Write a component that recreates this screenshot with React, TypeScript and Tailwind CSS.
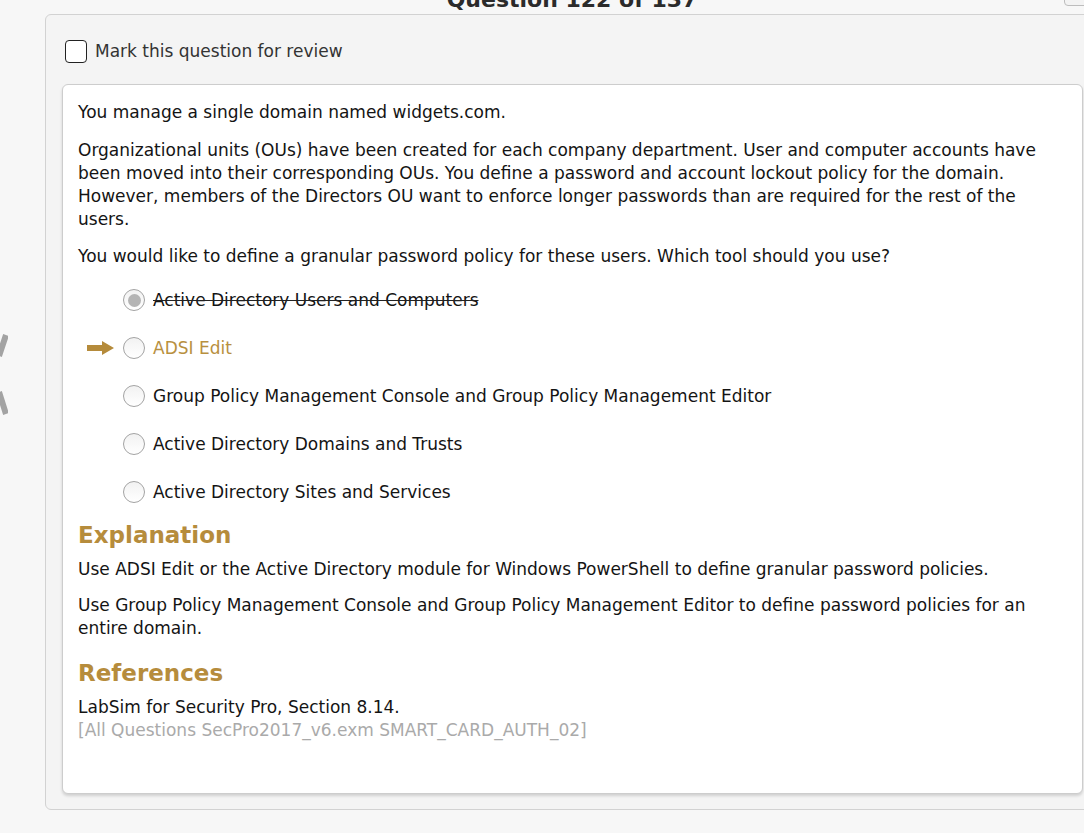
import React from 'react'

const FONT = { fontFamily: '"DejaVu Sans", Verdana, sans-serif' }

const OPTIONS = [
  { label: 'Active Directory Users and Computers', state: 'struck' },
  { label: 'ADSI Edit', state: 'answer' },
  { label: 'Group Policy Management Console and Group Policy Management Editor', state: '' },
  { label: 'Active Directory Domains and Trusts', state: '' },
  { label: 'Active Directory Sites and Services', state: '' },
]

function Radio({ checked }: { checked?: boolean }) {
  return (
    <span className="flex h-[22px] w-[22px] shrink-0 items-center justify-center rounded-full border border-[#a3a3a3] bg-gradient-to-b from-[#f2f2f2] to-white">
      {checked && <span className="h-[13px] w-[13px] rounded-full bg-[#b4b4b4]" />}
    </span>
  )
}

function Arrow() {
  return (
    <svg width="27" height="14" viewBox="0 0 27 14" className="shrink-0">
      <path d="M0 4h15V0l12 7-12 7v-4H0z" fill="#b58b3b" />
    </svg>
  )
}

export default function App() {
  return (
    <div className="h-[833px] w-full overflow-hidden bg-[#f7f7f7] text-[#141414]" style={FONT}>
      {/* clipped title strip */}
      <div className="relative h-[14px] overflow-hidden">
        <div className="-mt-[11px] pl-[60px] text-center text-[22px] font-bold leading-[22px] text-[#2b2b2b]">Question 122 of 137</div>
        <div className="absolute right-[-6px] top-[-10px] h-[16px] w-[26px] rounded-[4px] border border-[#bdbdbd] bg-[#f3f3f3]" />
      </div>

      <div className="flex">
        {/* left gutter with cut-off nav glyph */}
        <div className="w-[45px] shrink-0 pt-[318px]">
          <svg width="8" height="100" viewBox="0 0 8 100">
            <path d="M-1 24 L6 3 M-1 60 L6 82" stroke="#a3a3a3" strokeWidth="6" fill="none" />
          </svg>
        </div>

        <div className="h-[796px] w-[1060px] shrink-0 rounded-[6px] border border-[#d2d2d2] bg-[#f4f4f4] px-[16px] pt-[24px]">
          <label className="flex items-center gap-[8px] pl-[3px] text-[17px] text-[#333]">
            <span className="h-[23px] w-[22px] rounded-[4px] border border-[#222] bg-white" />
            <span>Mark this question for review</span>
          </label>

          <div className="mt-[19px] h-[710px] w-[1021px] rounded-[6px] border border-[#cdcdcd] bg-white px-[15px] pt-[16px] text-[17px] leading-[23px] shadow-[0_2px_3px_rgba(0,0,0,0.15)]">
            <p>You manage a single domain named widgets.com.</p>
            <p className="mt-[15px]">
              Organizational units (OUs) have been created for each company department. User and computer accounts have<br />
              been moved into their corresponding OUs. You define a password and account lockout policy for the domain.<br />
              However, members of the Directors OU want to enforce longer passwords than are required for the rest of the<br />
              users.
            </p>
            <p className="mt-[14px]">You would like to define a granular password policy for these users. Which tool should you use?</p>

            <div className="mt-[21px] flex flex-col gap-[25px]">
              {OPTIONS.map(o => (
                <div key={o.label} className="flex items-center">
                  <div className="flex w-[45px] justify-end pr-[9px]">{o.state === 'answer' && <Arrow />}</div>
                  <Radio checked={o.state === 'struck'} />
                  <span
                    className={
                      'ml-[8px] ' +
                      (o.state === 'struck' ? 'line-through decoration-[#222]' : o.state === 'answer' ? 'text-[#b8903f]' : '')
                    }
                  >
                    {o.label}
                  </span>
                </div>
              ))}
            </div>

            <h2 className="mt-[16px] text-[23px] font-bold leading-[30px] text-[#b68c3c]">Explanation</h2>
            <p className="mt-[8px]">Use ADSI Edit or the Active Directory module for Windows PowerShell to define granular password policies.</p>
            <p className="mt-[13px]">
              Use Group Policy Management Console and Group Policy Management Editor to define password policies for an<br />
              entire domain.
            </p>

            <h2 className="mt-[18px] text-[23px] font-bold leading-[30px] text-[#b68c3c]">References</h2>
            <p className="mt-[8px]">LabSim for Security Pro, Section 8.14.</p>
            <p className="text-[#aaaaaa]">[All Questions SecPro2017_v6.exm SMART_CARD_AUTH_02]</p>
          </div>
        </div>
      </div>
    </div>
  )
}
